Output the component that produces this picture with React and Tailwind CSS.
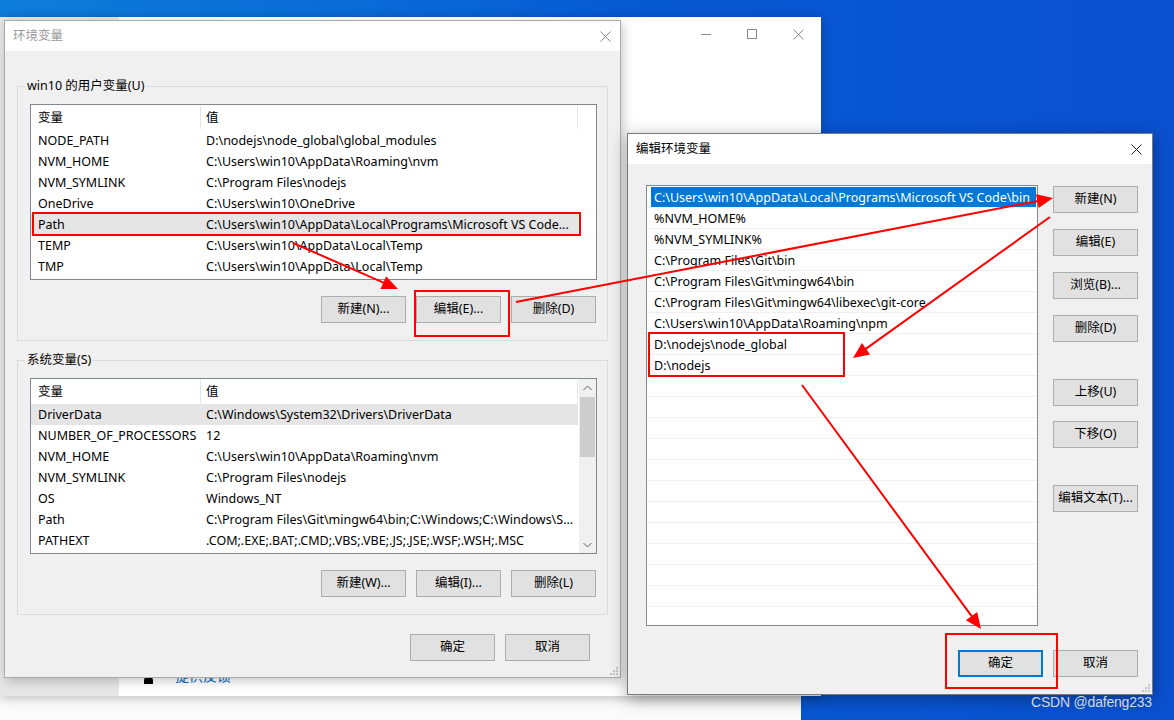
import React from "react";

const FONT = "[font-family:'Noto_Sans','Noto_Sans_CJK_SC',sans-serif]";

const userRows = [
  ["NODE_PATH", "D:\\nodejs\\node_global\\global_modules"],
  ["NVM_HOME", "C:\\Users\\win10\\AppData\\Roaming\\nvm"],
  ["NVM_SYMLINK", "C:\\Program Files\\nodejs"],
  ["OneDrive", "C:\\Users\\win10\\OneDrive"],
  ["Path", "C:\\Users\\win10\\AppData\\Local\\Programs\\Microsoft VS Code..."],
  ["TEMP", "C:\\Users\\win10\\AppData\\Local\\Temp"],
  ["TMP", "C:\\Users\\win10\\AppData\\Local\\Temp"],
];

const sysRows = [
  ["DriverData", "C:\\Windows\\System32\\Drivers\\DriverData"],
  ["NUMBER_OF_PROCESSORS", "12"],
  ["NVM_HOME", "C:\\Users\\win10\\AppData\\Roaming\\nvm"],
  ["NVM_SYMLINK", "C:\\Program Files\\nodejs"],
  ["OS", "Windows_NT"],
  ["Path", "C:\\Program Files\\Git\\mingw64\\bin;C:\\Windows;C:\\Windows\\S..."],
  ["PATHEXT", ".COM;.EXE;.BAT;.CMD;.VBS;.VBE;.JS;.JSE;.WSF;.WSH;.MSC"],
];

const pathRows = [
  "C:\\Users\\win10\\AppData\\Local\\Programs\\Microsoft VS Code\\bin",
  "%NVM_HOME%",
  "%NVM_SYMLINK%",
  "C:\\Program Files\\Git\\bin",
  "C:\\Program Files\\Git\\mingw64\\bin",
  "C:\\Program Files\\Git\\mingw64\\libexec\\git-core",
  "C:\\Users\\win10\\AppData\\Roaming\\npm",
  "D:\\nodejs\\node_global",
  "D:\\nodejs",
  "", "", "", "", "", "", "", "", "", "", "", "", "",
];

function CloseX({ className }) {
  return (
    <svg width="11" height="11" viewBox="0 0 11 11" className={className}>
      <path d="M0.5 0.5L10.5 10.5M10.5 0.5L0.5 10.5" stroke="currentColor" strokeWidth="1" fill="none" />
    </svg>
  );
}

function Grip() {
  const dots = [[7, 1], [4, 4], [7, 4], [1, 7], [4, 7], [7, 7]];
  return (
    <svg width="9" height="9" viewBox="0 0 9 9">
      {dots.map(([x, y], i) => (
        <rect key={i} x={x} y={y} width="2" height="2" fill="#c4c4c4" />
      ))}
    </svg>
  );
}

function Chevron({ down }) {
  return (
    <svg width="9" height="6" viewBox="0 0 9 6">
      <path
        d={down ? "M0.5 1L4.5 5L8.5 1" : "M0.5 5L4.5 1L8.5 5"}
        stroke="#606060"
        strokeWidth="1"
        fill="none"
      />
    </svg>
  );
}

function Btn({ children, primary }) {
  return (
    <div
      className={
        primary
          ? "h-[27px] w-[85px] shrink-0 flex items-center justify-center bg-[#e1e1e1] border-2 border-[#0078d7] text-black"
          : "h-[27px] w-[85px] shrink-0 flex items-center justify-center bg-[#e1e1e1] border border-[#adadad] text-black"
      }
    >
      {children}
    </div>
  );
}

function VarList({ rows, selected, scrollbar }) {
  return (
    <div className="h-[176px] border border-[#828790] bg-white flex overflow-hidden">
      <div className="flex-1 min-w-0 flex flex-col">
        <div className="h-[25px] shrink-0 flex">
          <div className="w-[170px] shrink-0 flex items-center pl-[7px] pt-px border-r border-[#e5e5e5] my-[1px]">变量</div>
          <div className="w-[377px] shrink-0 flex items-center pl-[5px] pt-px border-r border-[#e5e5e5] my-[1px]">值</div>
        </div>
        {rows.map(([k, v], i) => (
          <div
            key={i}
            className={
              i === selected
                ? "h-[21px] w-[547px] shrink-0 flex items-center pt-[2px] bg-[#e5e5e5]"
                : "h-[21px] w-[547px] shrink-0 flex items-center pt-[2px]"
            }
          >
            <div className="w-[170px] shrink-0 pl-[7px] whitespace-nowrap overflow-hidden">{k}</div>
            <div className="w-[377px] shrink-0 pl-[5px] whitespace-nowrap overflow-hidden">{v}</div>
          </div>
        ))}
      </div>
      {scrollbar && (
        <div className="w-[17px] shrink-0 bg-[#f0f0f0] flex flex-col items-center">
          <div className="h-[17px] w-full flex items-center justify-center">
            <Chevron />
          </div>
          <div className="w-[15px] h-[60px] mt-[1px] bg-[#cdcdcd]" />
          <div className="flex-1" />
          <div className="h-[17px] w-full flex items-center justify-center">
            <Chevron down />
          </div>
        </div>
      )}
    </div>
  );
}

function Group({ title, children, className }) {
  return (
    <fieldset className={"border border-[#dcdcdc] p-0 m-0 min-w-0 " + className}>
      <legend className="ml-[7px] px-[2px] leading-[16px]">{title}</legend>
      {children}
    </fieldset>
  );
}

function Arrow({ x1, y1, x2, y2 }) {
  const dx = x2 - x1;
  const dy = y2 - y1;
  const len = Math.hypot(dx, dy);
  const ux = dx / len;
  const uy = dy / len;
  const L = 16;
  const W = 7;
  const bx = x2 - ux * L;
  const by = y2 - uy * L;
  const px = -uy;
  const py = ux;
  const pts = `${x2},${y2} ${bx + px * W},${by + py * W} ${bx - px * W},${by - py * W}`;
  return (
    <g>
      <line x1={x1} y1={y1} x2={bx + ux * 2} y2={by + uy * 2} stroke="#ff0000" strokeWidth="2" />
      <polygon points={pts} fill="#ff0000" />
    </g>
  );
}

export default function App() {
  return (
    <div
      className={
        "relative w-[1174px] h-[720px] overflow-hidden text-[12.5px] text-black bg-[linear-gradient(90deg,#0e7cd9_0%,#0a6bd6_30%,#0759d2_55%,#0a50cf_100%)] " +
        FONT
      }
    >
      {/* lower white window strip */}
      <div className="absolute left-0 top-[696px] w-[801px] h-[24px] bg-[#fbfbfb]" />

      {/* background settings window */}
      <div className="absolute left-0 top-[17px] w-[821px] h-[679px] bg-white flex shadow-[0_2px_10px_rgba(0,0,0,0.25)]">
        <div className="w-[119px] shrink-0 bg-[#e6e6e6]" />
        <div className="flex-1 flex flex-col">
          <div className="h-[34px] flex justify-end text-[#8a8a8a]">
            <div className="w-[46px] flex items-center justify-center">
              <div className="w-[10px] h-px bg-[#8a8a8a]" />
            </div>
            <div className="w-[46px] flex items-center justify-center">
              <div className="w-[10px] h-[10px] border border-[#8a8a8a]" />
            </div>
            <div className="w-[46px] flex items-center justify-center">
              <CloseX />
            </div>
          </div>
          <div className="flex-1" />
          <div className="flex items-end pl-[25px] mb-[12px]">
            <div className="w-[9px] h-[8px] rounded-t-full bg-black" />
            <div className="ml-[22px] text-[14px] leading-[16px] text-[#0067c0]">提供反馈</div>
          </div>
        </div>
      </div>

      {/* 环境变量 dialog */}
      <div className="absolute left-[4px] top-[20px] w-[617px] h-[658px] border border-[#aaaaaa] bg-[#f0f0f0] flex flex-col shadow-[2px_3px_10px_rgba(0,0,0,0.22)]">
        <div className="h-[30px] shrink-0 bg-white flex items-center justify-between pl-[8px] pr-[9px] text-[#9a9a9a]">
          <span>环境变量</span>
          <CloseX className="text-[#8a8a8a]" />
        </div>
        <div className="flex-1 flex flex-col px-[12px]">
          <Group title="win10 的用户变量(U)" className="mt-[27px]">
            <div className="pt-[10px] pl-[12px] pr-[10px] pb-[17px] flex flex-col">
              <VarList rows={userRows} selected={4} />
              <div className="mt-[16px] flex justify-end gap-[10px] pr-px">
                <Btn>新建(N)...</Btn>
                <Btn>编辑(E)...</Btn>
                <Btn>删除(D)</Btn>
              </div>
            </div>
          </Group>
          <Group title="系统变量(S)" className="mt-[11px]">
            <div className="pt-[10px] pl-[12px] pr-[10px] pb-[17px] flex flex-col">
              <VarList rows={sysRows} selected={0} scrollbar />
              <div className="mt-[16px] flex justify-end gap-[10px] pr-px">
                <Btn>新建(W)...</Btn>
                <Btn>编辑(I)...</Btn>
                <Btn>删除(L)</Btn>
              </div>
            </div>
          </Group>
          <div className="mt-[19px] mr-[18px] flex justify-end gap-[10px]">
            <Btn>确定</Btn>
            <Btn>取消</Btn>
          </div>
        </div>
        <div className="absolute right-[2px] bottom-[2px]">
          <Grip />
        </div>
      </div>

      {/* 编辑环境变量 dialog */}
      <div className="absolute left-[627px] top-[133px] w-[526px] h-[562px] border border-[#7a7a7a] bg-[#f0f0f0] flex flex-col shadow-[0_4px_16px_rgba(0,0,0,0.35)]">
        <div className="h-[30px] shrink-0 bg-white flex items-center justify-between pl-[8px] pr-[10px]">
          <span>编辑环境变量</span>
          <CloseX className="text-[#222]" />
        </div>
        <div className="flex-1 flex flex-col pl-[18px] pr-[14px] pt-[21px]">
          <div className="flex gap-[15px]">
            <div className="w-[392px] h-[441px] border border-[#828790] bg-white overflow-hidden pt-px">
              {pathRows.map((r, i) => (
                <div key={i} className="h-[21px] border-b border-[#f0f0f0] pl-[4px] pr-px flex items-stretch">
                  {i === 0 ? (
                    <div className="flex-1 bg-[#0078d7] text-white pl-[3px] pt-[2px] flex items-center whitespace-nowrap overflow-hidden">
                      {r}
                    </div>
                  ) : (
                    <div className="flex-1 pl-[3px] pt-[2px] flex items-center whitespace-nowrap overflow-hidden">{r}</div>
                  )}
                </div>
              ))}
            </div>
            <div className="flex flex-col pt-px">
              <Btn>新建(N)</Btn>
              <div className="mt-[16px]"><Btn>编辑(E)</Btn></div>
              <div className="mt-[16px]"><Btn>浏览(B)...</Btn></div>
              <div className="mt-[16px]"><Btn>删除(D)</Btn></div>
              <div className="mt-[37px]"><Btn>上移(U)</Btn></div>
              <div className="mt-[15px]"><Btn>下移(O)</Btn></div>
              <div className="mt-[37px]"><Btn>编辑文本(T)...</Btn></div>
            </div>
          </div>
          <div className="mt-[24px] flex justify-end gap-[10px]">
            <Btn primary>确定</Btn>
            <Btn>取消</Btn>
          </div>
        </div>
        <div className="absolute right-[2px] bottom-[2px]">
          <Grip />
        </div>
      </div>

      {/* annotation boxes */}
      <div className="absolute left-[32px] top-[212px] w-[549px] h-[24px] border-2 border-[#ff0000]" />
      <div className="absolute left-[414px] top-[290px] w-[96px] h-[47px] border-2 border-[#ff0000]" />
      <div className="absolute left-[648px] top-[332px] w-[197px] h-[45px] border-2 border-[#ff0000]" />
      <div className="absolute left-[945px] top-[633px] w-[113px] h-[56px] border-2 border-[#ff0000]" />

      {/* annotation arrows */}
      <svg className="absolute left-0 top-0 pointer-events-none" width="1174" height="720" viewBox="0 0 1174 720">
        <Arrow x1={293} y1={243} x2={398} y2={289} />
        <Arrow x1={516} y1={302} x2={1053} y2={198} />
        <Arrow x1={1050} y1={217} x2={853} y2={358} />
        <Arrow x1={802} y1={385} x2={981} y2={629} />
      </svg>

      {/* watermark */}
      <div className="absolute left-[1031px] top-[693px] text-[14px] leading-[18px] text-[#d2d8e4] [font-family:'Liberation_Sans',sans-serif] tracking-[-0.2px]">
        CSDN @dafeng233
      </div>
    </div>
  );
}
